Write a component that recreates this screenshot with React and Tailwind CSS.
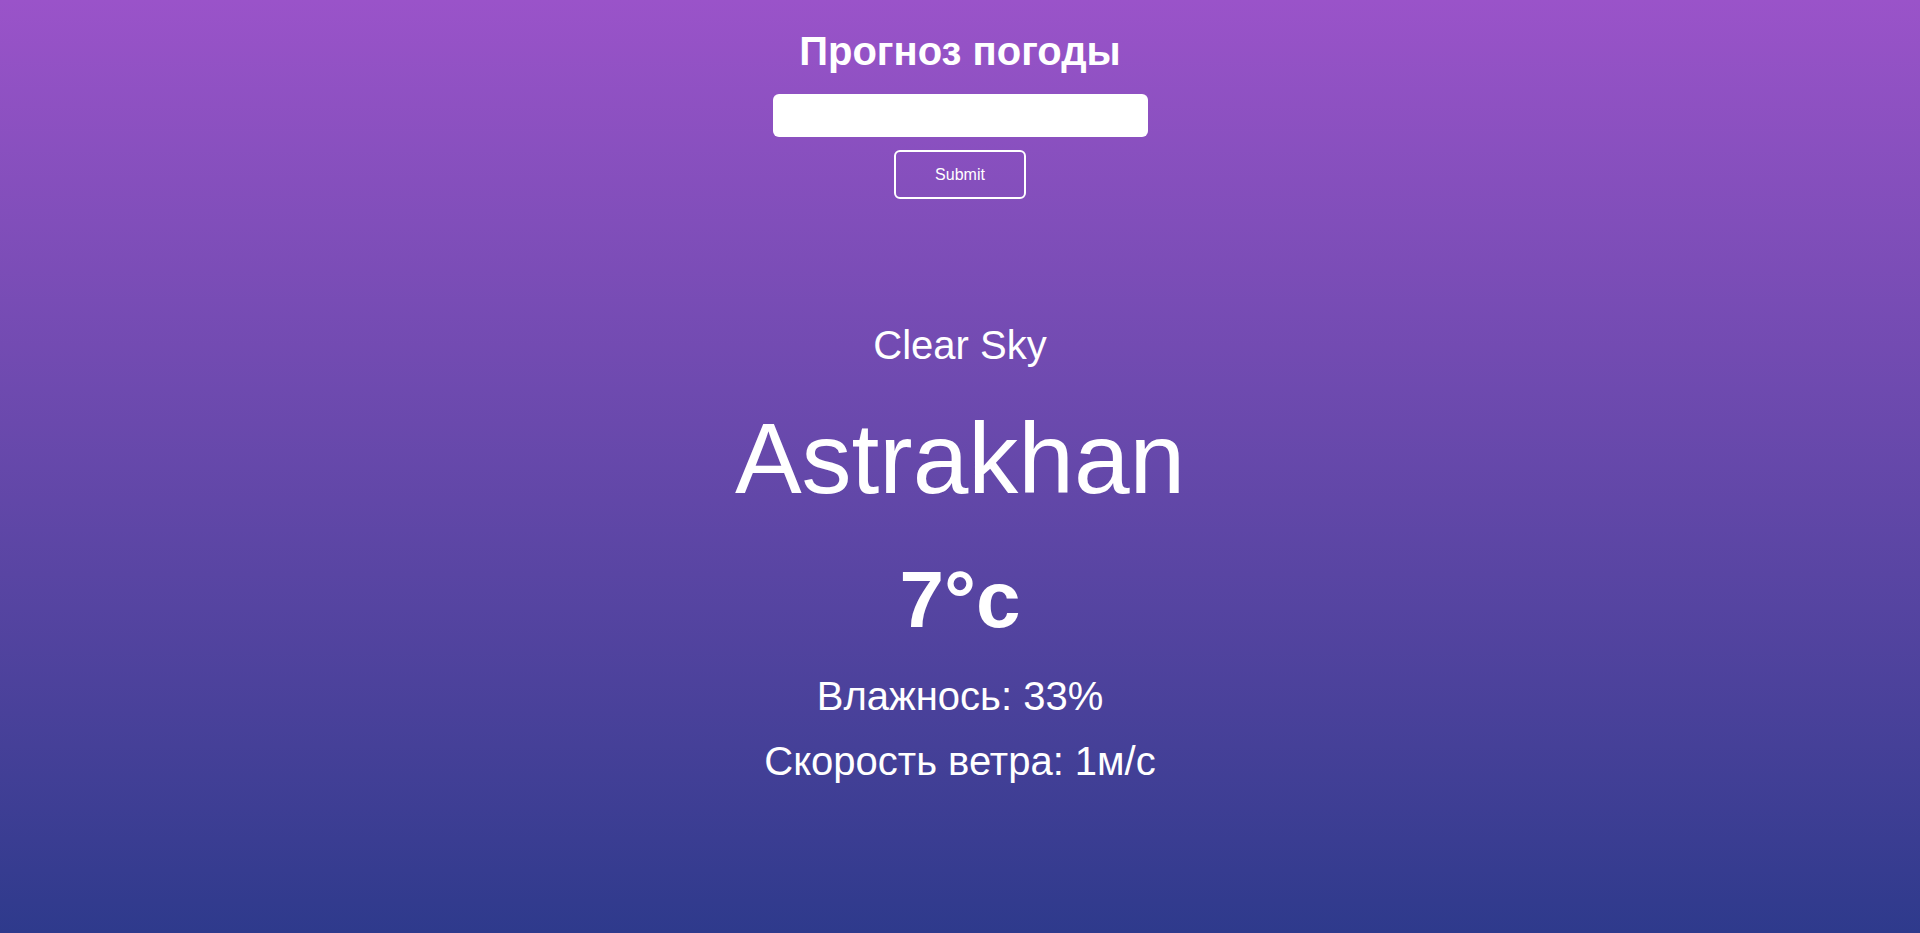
import { useState } from "react";

export default function App() {
  const [city, setCity] = useState("");

  const weather = {
    description: "Clear Sky",
    name: "Astrakhan",
    temp: 7,
    humidity: 33,
    wind: 1,
  };

  return (
    <div className="min-h-screen w-full bg-linear-to-b from-[#9a53c9] to-[#2e3a8c] text-white font-['Liberation_Sans',Arial,sans-serif] flex flex-col items-center">
      <h1 className="mt-[31px] text-[40px] leading-none font-bold">Прогноз погоды</h1>
      <form
        className="flex flex-col items-center"
        onSubmit={(e) => e.preventDefault()}
      >
        <input
          type="text"
          value={city}
          onChange={(e) => setCity(e.target.value)}
          className="mt-[23px] w-[375px] h-[43px] rounded-md bg-white text-black px-3 outline-none"
        />
        <button
          type="submit"
          className="mt-[13px] w-[132px] h-[49px] rounded-md border-2 border-white text-white text-base"
        >
          Submit
        </button>
      </form>

      <div className="flex flex-col items-center">
        <p className="mt-[126px] text-[40px] leading-none">{weather.description}</p>
        <h2 className="mt-[43px] text-[100px] leading-none">{weather.name}</h2>
        <p className="mt-[52px] text-[80px] leading-none font-bold">{weather.temp}°c</p>
        <p className="mt-[36px] text-[40px] leading-none">Влажнось: {weather.humidity}%</p>
        <p className="mt-[25px] text-[40px] leading-none">Скорость ветра: {weather.wind}м/с</p>
      </div>
    </div>
  );
}
